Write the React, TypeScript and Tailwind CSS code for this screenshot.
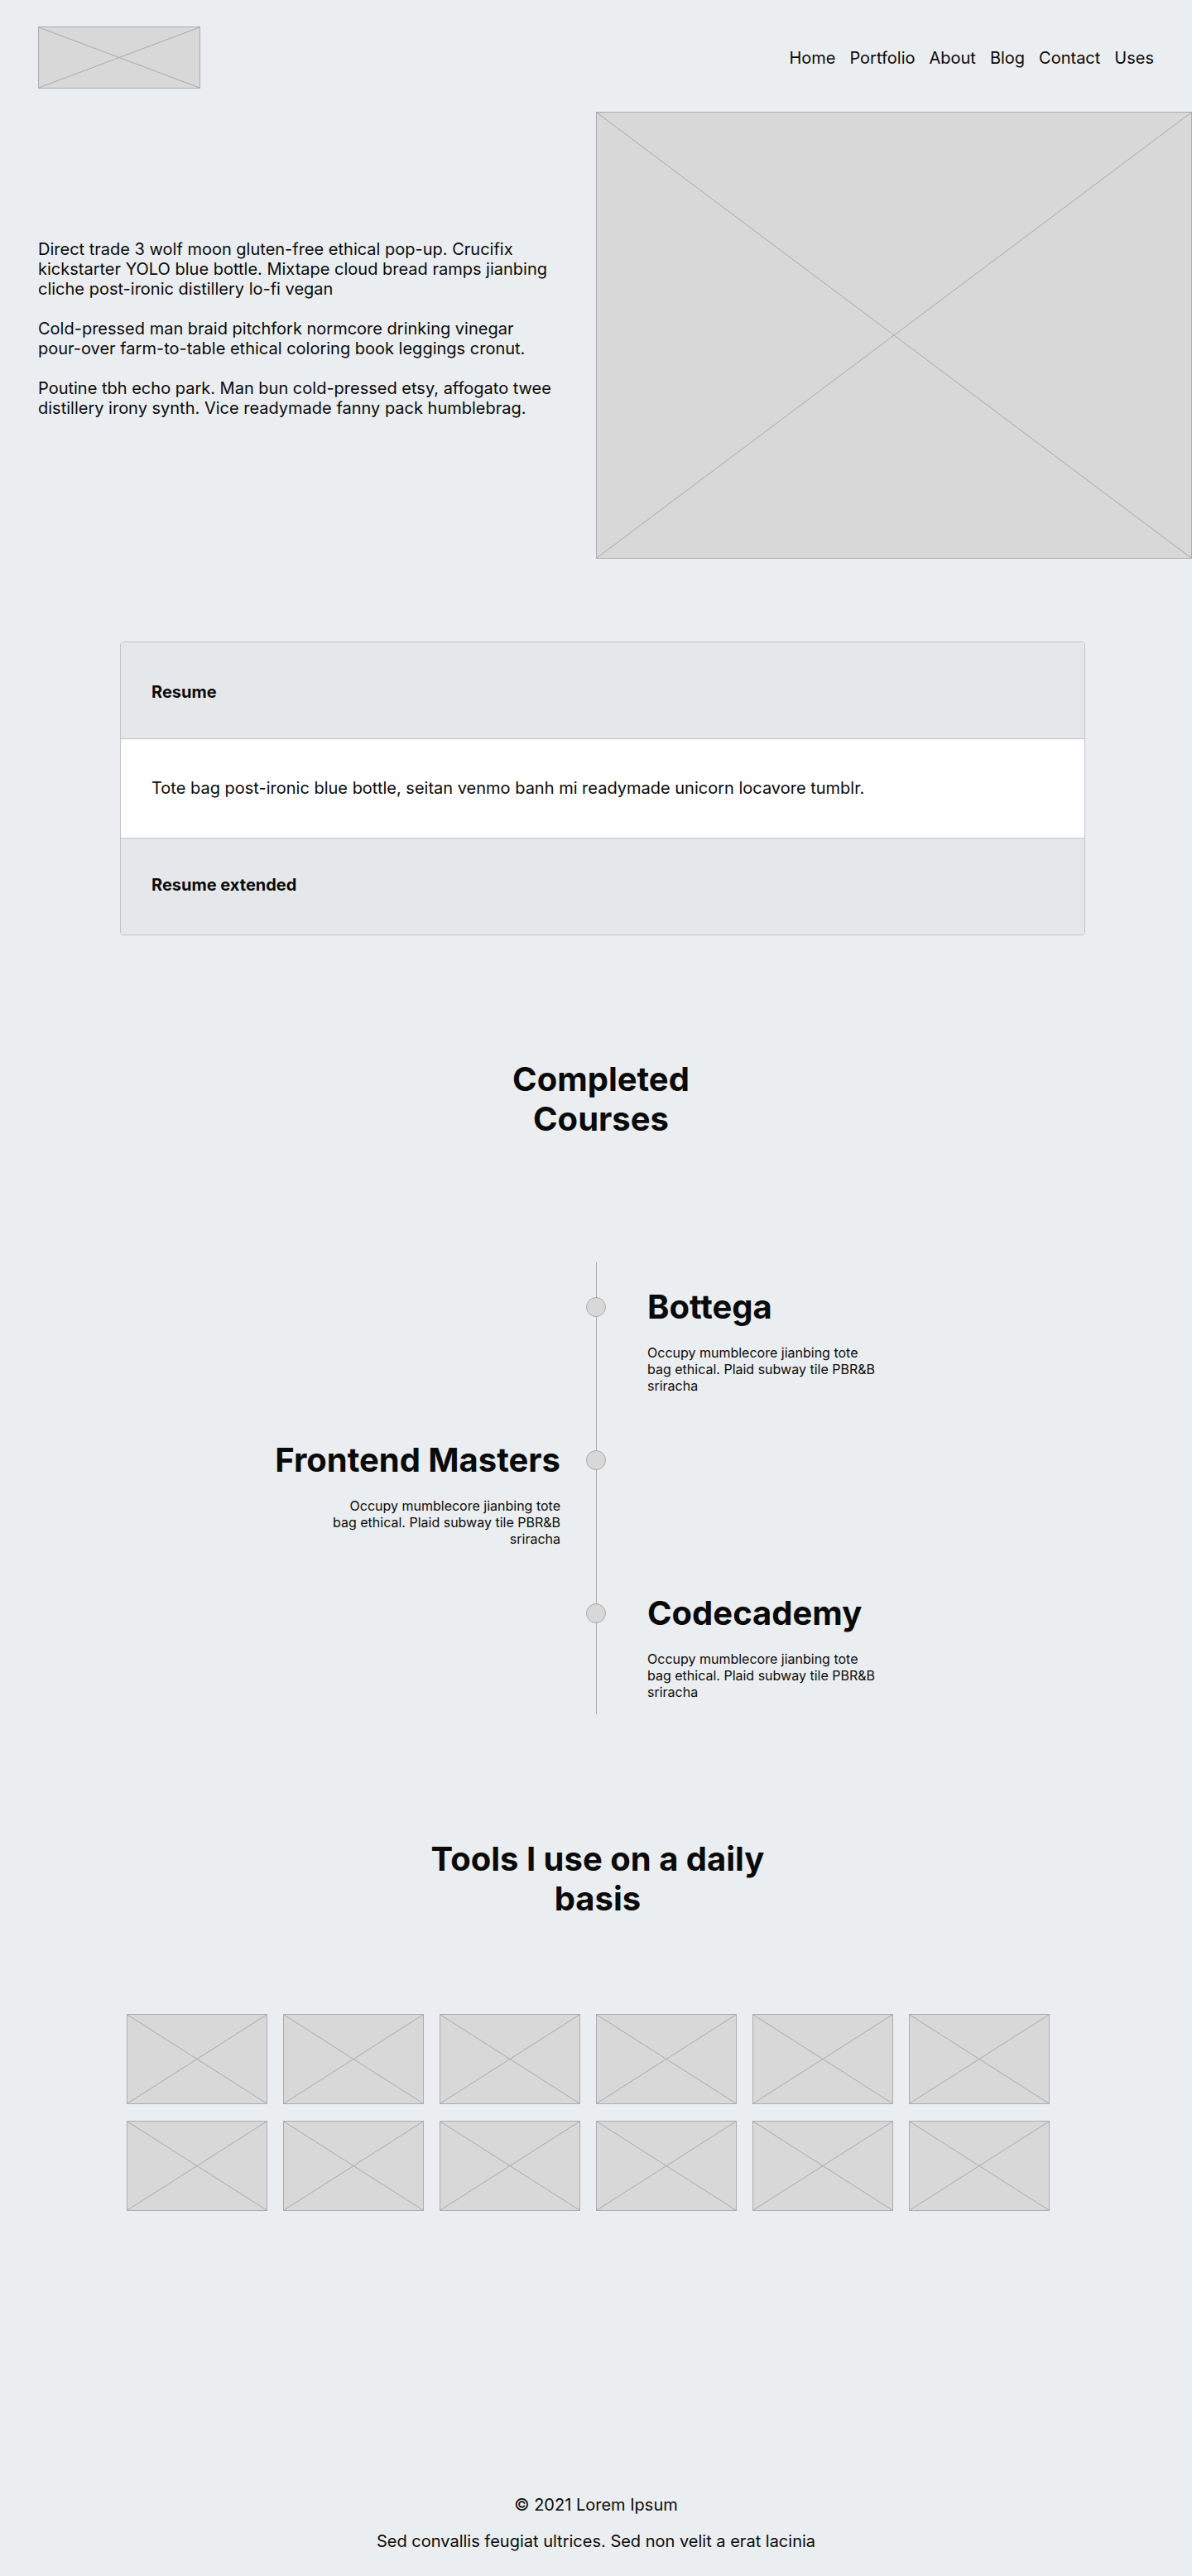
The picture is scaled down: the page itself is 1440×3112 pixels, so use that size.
import React from "react";

// grey placeholder with an X across it
const Placeholder = ({ className }: { className?: string }) => (
  <div className={"relative bg-[#d8d8d8] border border-[#acacac] " + (className ?? "")}>
    <svg className="absolute inset-0 h-full w-full" preserveAspectRatio="none" viewBox="0 0 100 100">
      <line x1="0" y1="0" x2="100" y2="100" stroke="#a9a9a9" strokeWidth="1" vectorEffect="non-scaling-stroke" />
      <line x1="100" y1="0" x2="0" y2="100" stroke="#a9a9a9" strokeWidth="1" vectorEffect="non-scaling-stroke" />
    </svg>
  </div>
);

const navLinks = ["Home", "Portfolio", "About", "Blog", "Contact", "Uses"];

const courses = [
  { title: "Bottega", side: "right" },
  { title: "Frontend Masters", side: "left" },
  { title: "Codecademy", side: "right" },
];

const desc = "Occupy mumblecore jianbing tote bag ethical. Plaid subway tile PBR&B sriracha";

const App: React.FC = () => {
  return (
    <div className="min-h-screen bg-[#ebeef1] text-[#0a0a0a] font-['Inter',sans-serif]">
      {/* header */}
      <header className="flex items-center justify-between px-[46px] pt-8 pb-7">
        <Placeholder className="h-[75px] w-[196px]" />
        <nav className="flex gap-[17px] text-xl leading-6">
          {navLinks.map((l) => (
            <a key={l} href="#" className="hover:underline">
              {l}
            </a>
          ))}
        </nav>
      </header>

      {/* hero */}
      <section className="grid grid-cols-2 items-center">
        <div className="pl-[46px] pb-4">
          <div className="w-[671px] text-xl leading-6">
            <p className="mb-6">
              Direct trade 3 wolf moon gluten-free ethical pop-up. Crucifix kickstarter YOLO blue bottle. Mixtape
              cloud bread ramps jianbing cliche post-ironic distillery lo-fi vegan
            </p>
            <p className="mb-6">
              Cold-pressed man braid pitchfork normcore drinking vinegar{" "}
              <span className="whitespace-nowrap">pour-over</span> farm-to-table ethical coloring book leggings
              cronut.
            </p>
            <p>
              Poutine tbh echo park. Man bun cold-pressed etsy, affogato twee distillery irony synth. Vice readymade
              fanny pack humblebrag.
            </p>
          </div>
        </div>
        <Placeholder className="h-[540px] w-[720px]" />
      </section>

      {/* accordion */}
      <section className="mt-[100px] ml-[145px] w-[1166px] overflow-hidden rounded border border-[#c0c4c8]">
        <div className="bg-[#e5e8ea] px-[37px] pt-[50px] pb-[46px] text-xl font-bold leading-[20px]">Resume</div>
        <div className="border-y border-[#c0c4c8] bg-white px-[37px] py-12 text-xl leading-[23px]">
          Tote bag post-ironic blue bottle, seitan venmo banh mi readymade unicorn locavore tumblr.
        </div>
        <div className="bg-[#e5e8ea] px-[37px] pt-[46px] pb-[50px] text-xl font-bold leading-[20px]">
          Resume extended
        </div>
      </section>

      {/* completed courses */}
      <h2 className="mx-auto mt-[150px] w-[300px] pl-3 text-center text-[40px] font-bold leading-[48px]">
        Completed Courses
      </h2>

      <section className="relative mt-[149px] pt-[34px] pb-[17px]">
        <div className="absolute top-0 bottom-0 left-1/2 w-px bg-[#a8a8a8]" />
        <div className="flex flex-col gap-[60px]">
          {courses.map((c) => (
            <div key={c.title} className="relative grid grid-cols-2">
              <div className="absolute top-[8px] left-[708px] h-[24px] w-[24px] rounded-full border border-[#a9a9a9] bg-[#d8d8d8]" />
              {c.side === "left" ? (
                <>
                  <div className="pr-[43px] text-right">
                    <h3 className="text-[40px] font-bold leading-[40px]">{c.title}</h3>
                    <p className="mt-[25px] ml-auto w-[280px] text-base leading-5">{desc}</p>
                  </div>
                  <div />
                </>
              ) : (
                <>
                  <div />
                  <div className="pl-[62px]">
                    <h3 className="text-[40px] font-bold leading-[40px]">{c.title}</h3>
                    <p className="mt-[25px] w-[280px] text-base leading-5">{desc}</p>
                  </div>
                </>
              )}
            </div>
          ))}
        </div>
      </section>

      {/* tools */}
      <h2 className="mx-auto mt-[151px] w-[420px] pl-1 text-center text-[40px] font-bold leading-[48px]">
        Tools I use on a daily basis
      </h2>

      <section className="mt-[115px] ml-[153px] grid w-[1115px] grid-cols-6 gap-x-[19px] gap-y-5">
        {Array.from({ length: 12 }).map((_, i) => (
          <Placeholder key={i} className="h-[109px] w-[170px]" />
        ))}
      </section>

      {/* footer */}
      <footer className="mt-[341px] flex flex-col items-center gap-4 pb-8 text-xl leading-7">
        <p>© 2021 Lorem Ipsum</p>
        <p>Sed convallis feugiat ultrices. Sed non velit a erat lacinia</p>
      </footer>
    </div>
  );
};

export default App;
